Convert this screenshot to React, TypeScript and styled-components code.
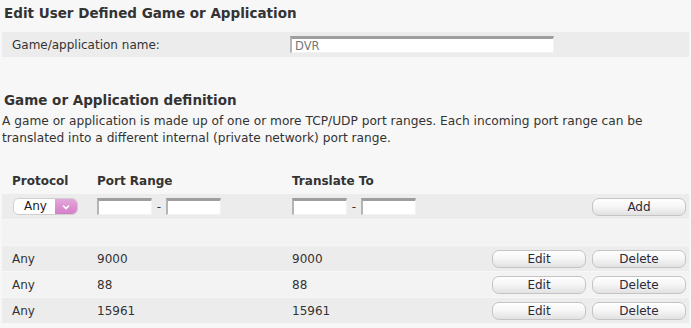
import React from 'react';
import styled, { createGlobalStyle } from 'styled-components';

const GlobalStyle = createGlobalStyle`
    body {
        margin: 0;
        background: #f7f7f7;
        font-family: 'DejaVu Sans', Verdana, sans-serif;
        font-size: 12px;
        color: #333;
    }
`;

const Page = styled.div`
    width: 691px;
    padding-top: 4px;
`;

const Title = styled.h2`
    margin: 0 0 0 4px;
    height: 28px;
    font-size: 13.5px;
    font-weight: bold;
    line-height: 18px;
    color: #333;
`;

const SubTitle = styled(Title)`
    height: 22px;
`;

const Intro = styled.p`
    margin: 0 0 0 2px;
    line-height: 17px;
    width: 665px;
    font-size: 12.2px;
`;

const Row = styled.div<{ $shade?: 'dark' | 'light' | 'none' }>`
    display: grid;
    grid-template-columns: 85px 195px 1fr auto;
    align-items: center;
    height: 25px;
    margin: 0 2px 1px;
    padding: 0 3px 0 10px;
    background: ${(p) => (p.$shade === 'dark' ? '#ececec' : p.$shade === 'light' ? '#f3f3f3' : 'transparent')};
`;

const NameRow = styled.div`
    display: grid;
    grid-template-columns: 278px 1fr;
    align-items: center;
    height: 25px;
    margin: 0 2px;
    padding-left: 10px;
    background: #ececec;
`;

const HeadCell = styled.div`
    font-weight: bold;
    font-size: 12px;
`;

const TextInput = styled.input<{ $w: number }>`
    box-sizing: border-box;
    width: ${(p) => p.$w}px;
    height: 17px;
    margin: 0;
    padding: 1px 3px 0;
    border-style: solid;
    border-width: 3px 1px 1px 2px;
    border-color: #9e9e9e #f2f2f2 #f2f2f2 #b4b4b4;
    background: #fff;
    font-family: 'DejaVu Sans', Verdana, sans-serif;
    font-size: 11.5px;
    color: #777;
    outline: none;
`;

const Range = styled.div`
    display: flex;
    align-items: center;
`;

const Dash = styled.span`
    width: 14px;
    text-align: center;
`;

const Select = styled.div`
    display: flex;
    width: 65px;
    height: 17px;
    border: 1px solid #cfcfcf;
    border-radius: 6px;
    overflow: hidden;
    box-sizing: border-box;
    margin-left: 1px;
`;

const SelectValue = styled.span`
    flex: 1;
    background: #fff;
    text-align: center;
    line-height: 15px;
    font-size: 12px;
    color: #222;
    padding-left: 2px;
`;

const SelectArrow = styled.span`
    width: 22px;
    display: flex;
    align-items: center;
    justify-content: center;
    background: linear-gradient(#e4a7da, #d37fc6);
`;

const Actions = styled.div`
    display: flex;
    gap: 6px;
`;

const Button = styled.button`
    box-sizing: border-box;
    width: 94px;
    height: 18px;
    padding: 0;
    border: 1px solid #c4c4c4;
    border-radius: 7px;
    background: linear-gradient(#ffffff 0%, #f6f6f6 45%, #e2e2e2 100%);
    font-family: 'DejaVu Sans', Verdana, sans-serif;
    font-size: 12px;
    color: #2a2a3a;
    line-height: 16px;
`;

const Spacer = styled.div<{ $h: number }>`
    height: ${(p) => p.$h}px;
`;

const rules = [
    { protocol: 'Any', port: '9000', translate: '9000' },
    { protocol: 'Any', port: '88', translate: '88' },
    { protocol: 'Any', port: '15961', translate: '15961' },
];

export default function App() {
    return (
        <Page>
            <GlobalStyle />
            <Title>Edit User Defined Game or Application</Title>
            <NameRow>
                <span>Game/application name:</span>
                <TextInput $w={264} defaultValue="DVR" />
            </NameRow>
            <Spacer $h={34} />
            <SubTitle>Game or Application definition</SubTitle>
            <Intro>
                A game or application is made up of one or more TCP/UDP port ranges. Each incoming port range can be translated into a different internal (private network) port range.
            </Intro>
            <Spacer $h={21} />
            <Row $shade="none">
                <HeadCell>Protocol</HeadCell>
                <HeadCell>Port Range</HeadCell>
                <HeadCell>Translate To</HeadCell>
                <div />
            </Row>
            <Row $shade="dark">
                <Select>
                    <SelectValue>Any</SelectValue>
                    <SelectArrow>
                        <svg width="8" height="6" viewBox="0 0 8 6">
                            <path d="M1 1.5 L4 4.5 L7 1.5" stroke="#fff" strokeWidth="1.6" fill="none" />
                        </svg>
                    </SelectArrow>
                </Select>
                <Range>
                    <TextInput $w={55} />
                    <Dash>-</Dash>
                    <TextInput $w={55} />
                </Range>
                <Range>
                    <TextInput $w={55} />
                    <Dash>-</Dash>
                    <TextInput $w={55} />
                </Range>
                <Actions>
                    <Button>Add</Button>
                </Actions>
            </Row>
            <Row $shade="light" />
            {rules.map((r, i) => (
                <Row $shade={i % 2 === 0 ? 'dark' : 'light'} key={i}>
                    <span>{r.protocol}</span>
                    <span>{r.port}</span>
                    <span>{r.translate}</span>
                    <Actions>
                        <Button>Edit</Button>
                        <Button>Delete</Button>
                    </Actions>
                </Row>
            ))}
        </Page>
    );
}
